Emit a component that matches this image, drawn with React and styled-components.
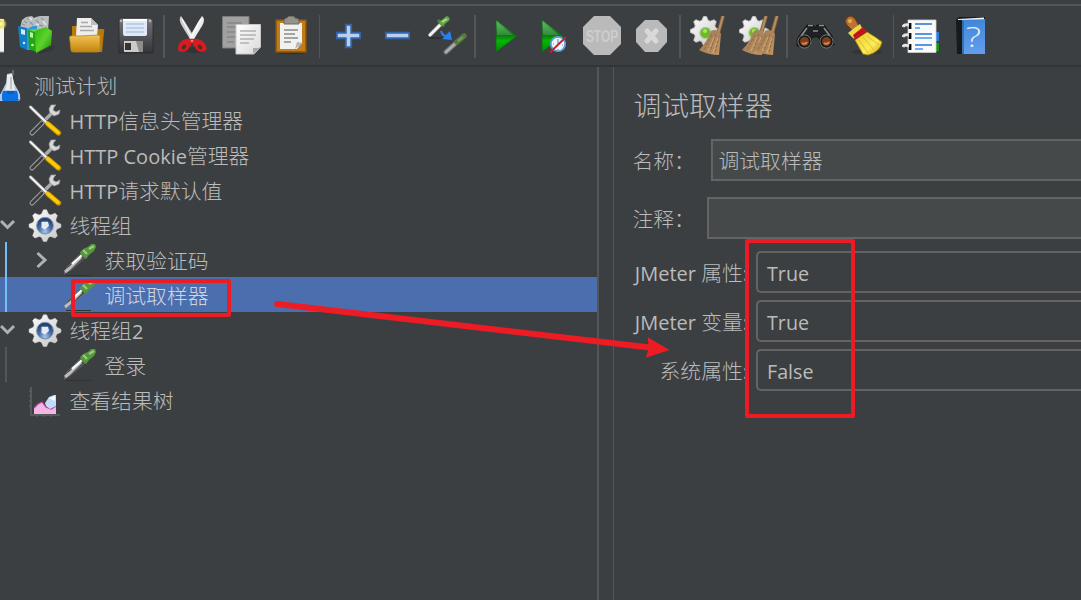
import React from "react";
import styled, { createGlobalStyle } from "styled-components";

const Global = createGlobalStyle`
  * { box-sizing: border-box; }
  body { margin: 0; overflow: hidden; background: #3c3f41; }
`;

const Window = styled.div`
  position: relative;
  display: flex;
  flex-direction: column;
  width: 1081px;
  height: 600px;
  padding-top: 4px;
  overflow: hidden;
  background: #3c3f41;
  color: #bbbbbb;
  font-family: "Open Sans", "Noto Sans CJK SC", sans-serif;
  font-size: 20.8px;
  font-weight: 300;
  line-height: 35px;
`;

const Toolbar = styled.div`
  display: flex;
  align-items: flex-start;
  height: 63px;
  padding-top: 9px;
  border-top: 2px solid #555555;
  border-bottom: 2px solid #323537;
`;

const Separator = styled.span`
  flex: none;
  width: ${(p) => p.$w || 2}px;
  height: 43px;
  margin-left: ${(p) => p.$gap}px;
  background: #555555;
`;

const ToolIcon = styled.svg`
  flex: none;
  display: block;
  height: 40px;
  margin-top: 1px;
  margin-left: ${(p) => p.$gap || 0}px;
`;

const Body = styled.div`
  display: flex;
  flex: 1;
  min-height: 0;
`;

const Tree = styled.div`
  flex: none;
  width: 597px;
`;

const Splitter = styled.div`
  flex: none;
  width: 17px;
  border-left: 2px solid #555555;
  border-right: 1px solid #555555;
`;

const TreeRow = styled.div`
  display: flex;
  align-items: center;
  height: 35px;
  padding-top: 4px;
  background: ${(p) => (p.$selected ? "#4b6eaf" : "transparent")};
  color: ${(p) => (p.$selected ? "#d0d5dc" : "#bbbbbb")};
  white-space: pre;
`;

const Gutter = styled.span`
  display: flex;
  align-items: center;
  flex: none;
  height: 35px;
  margin-top: -4px;
  width: ${(p) => p.$w}px;
`;

const Guide = styled.span`
  width: 2px;
  height: 35px;
  margin: 0 29px 0 5px;
  background: ${(p) => (p.$active ? "#73bef8" : "#555555")};
`;

const NodeIcon = styled.svg`
  flex: none;
  display: block;
  width: 36px;
  height: 35px;
  margin: -4px ${(p) => (p.$tight ? -2 : 6.5)}px 0 0;
`;

const Latin = styled.span`
  font-family: "Open Sans", sans-serif;
  font-weight: 400;
  font-size: ${(p) => p.$size || 20}px;
`;

const Panel = styled.div`
  flex: 1;
  padding: 19px 0 0 19.5px;
`;

const Title = styled.div`
  height: 40px;
  font-size: 27.8px;
  line-height: 39px;
`;

const Field = styled.div`
  display: flex;
  align-items: center;
  height: 42px;
  margin-top: ${(p) => p.$gap}px;
  white-space: pre;
`;

const FieldLabel = styled.span`
  flex: none;
  width: ${(p) => p.$w}px;
  padding-top: 2px;
  padding-right: ${(p) => (p.$align ? 3 : 0)}px;
  margin-left: ${(p) => (p.$align ? 0 : -1)}px;
  text-align: ${(p) => p.$align || "left"};
`;

const TextInput = styled.div`
  display: flex;
  align-items: center;
  flex: 1;
  height: 42px;
  padding: 2px 0 0 6px;
  background: #45494a;
  border: 2px solid #646464;
  border-right: 0;
`;

const Combo = styled.div`
  display: flex;
  align-items: center;
  flex: 1;
  height: 42px;
  margin-left: 5px;
  padding: 2px 0 0 9px;
  border: 2px solid #646464;
  border-right: 0;
  border-radius: 5px 0 0 5px;
`;

const Marker = styled.div`
  position: absolute;
  left: ${(p) => p.$x}px;
  top: ${(p) => p.$y}px;
  width: ${(p) => p.$w}px;
  height: ${(p) => p.$h}px;
  border: 4px solid #ed1c24;
  border-radius: 2px;
`;

const Arrow = styled.svg`
  position: absolute;
  left: 270px;
  top: 290px;
`;

const HiddenSvg = styled.svg`
  position: absolute;
`;

const Defs = () => (
  <HiddenSvg width="0" height="0">
    <defs>
      <linearGradient id="gold" x1="0" y1="0" x2="0" y2="1"><stop offset="0" stopColor="#efc35a" /><stop offset=".5" stopColor="#dba42f" /><stop offset="1" stopColor="#c08410" /></linearGradient>
      <linearGradient id="play" x1="0" y1="0" x2="0" y2="1"><stop offset="0" stopColor="#5fc067" /><stop offset=".45" stopColor="#16691a" /><stop offset=".65" stopColor="#00b900" /><stop offset="1" stopColor="#078508" /></linearGradient>
      <linearGradient id="disk" x1="0" y1="0" x2="0" y2="1"><stop offset="0" stopColor="#77777b" /><stop offset="1" stopColor="#343438" /></linearGradient>
      <linearGradient id="page" x1="0" y1="0" x2="1" y2="1"><stop offset="0" stopColor="#ffffff" /><stop offset="1" stopColor="#d9d9d9" /></linearGradient>
      <linearGradient id="straw" x1="0" y1="0" x2="1" y2="1"><stop offset="0" stopColor="#96775a" /><stop offset="1" stopColor="#c4945e" /></linearGradient>
      <linearGradient id="yellow" x1="0" y1="0" x2="1" y2="1"><stop offset="0" stopColor="#e5c928" /><stop offset=".6" stopColor="#ffec58" /><stop offset="1" stopColor="#c9a30f" /></linearGradient>
      <linearGradient id="blue" x1="0" y1="0" x2="0" y2="1"><stop offset="0" stopColor="#3f86d8" /><stop offset="1" stopColor="#659eef" /></linearGradient>
      <linearGradient id="binder" x1="0" y1="0" x2="1" y2="1"><stop offset="0" stopColor="#2fb412" /><stop offset=".5" stopColor="#5cd32c" /><stop offset="1" stopColor="#1c8b09" /></linearGradient>
      <radialGradient id="hub" cx=".5" cy=".85" r=".75"><stop offset="0" stopColor="#a5c8f1" /><stop offset=".5" stopColor="#496fa9" /><stop offset="1" stopColor="#233e70" /></radialGradient>
      <radialGradient id="glow"><stop offset="0" stopColor="#fffde0" /><stop offset=".5" stopColor="#ede05a" /><stop offset="1" stopColor="#ede05a" stopOpacity="0" /></radialGradient>
      <linearGradient id="silver" x1="0" y1="0" x2="1" y2="1"><stop offset="0" stopColor="#ffffff" /><stop offset="1" stopColor="#c4c4c4" /></linearGradient>
    </defs>
  </HiddenSvg>
);

const GEAR = Array.from({ length: 32 }, (_, i) => {
  const r = i % 4 < 2 ? 16 : 12.2;
  const a = ((i - 0.5) / 32) * Math.PI * 2;
  return `${(r * Math.cos(a)).toFixed(2)},${(r * Math.sin(a)).toFixed(2)}`;
}).join(" ");

const NewIcon = () => (
  <ToolIcon width="7" viewBox="0 0 7 40">
    <path d="M0 3H4V36H0Z" fill="#f5f5f2" /><path d="M0 36H4" stroke="#a4a4a4" />
    <circle cx="1" cy="8" r="6" fill="url(#glow)" />
  </ToolIcon>
);

const TemplatesIcon = () => (
  <ToolIcon $gap={11} width="38" viewBox="0 0 38 40">
    <path d="M22 36 37 29 34 35 20 38Z" fill="#2b2d2e" opacity=".5" />
    <path d="M2 12 4 4 8 1 14 0 16 2 18 1 22 0 31 0 30 16 5 16Z" fill="#b9bdbf" />
    <path d="M4 8 7 9M6 5 9 7M9 2 12 4M12 6 15 9M18 4 21 7M23 2 26 4M21 9 25 10" fill="none" stroke="#92979a" strokeWidth="1.3" />
    <path d="M11 2 14 4M18 8 21 9M25 5 28 9" stroke="#e1e4e5" strokeWidth="1.6" />
    <path d="M0 10 9 12V34L2 31Z" fill="#147dc5" /><path d="M9 13 15 10H19V34H9Z" fill="#2a9ce2" />
    <path d="M3 13 7 14V19L3 18Z" fill="#c9eaff" /><circle cx="6" cy="27" r="1.2" fill="#d4efff" />
    <path d="M10 14 17 15 18 36 11 33Z" fill="#22a70e" /><path d="M10 14 28 12 30 13 17 16Z" fill="#67d83e" /><path d="M17 15 28 11 34 15 33 29 18 37Z" fill="url(#binder)" />
    <path d="M12 16 15 17V22L12 21Z" fill="#b9f5a2" /><circle cx="14.5" cy="29" r="1.3" fill="#c7f9b6" />
  </ToolIcon>
);

const OpenIcon = () => (
  <ToolIcon $gap={13} width="37" viewBox="0 0 37 40">
    <path d="M3 18V10H12L14 13H34Q36 13 35 16L33 36H3Z" fill="#b87a0b" />
    <path d="M8 2 22 2 29 9 28 20H7Z" fill="#eeeeee" /><path d="M22 2V9H29Z" fill="#bebebe" />
    <path d="M12 6.5H19M11 10.5H23M11 14.5H25" stroke="#a8a8a8" strokeWidth="1.5" />
    <path d="M.5 21Q1 19 10 20L29 19Q32 19 31 22L31 34Q31 36 28 36H5Q2 36 2 34Z" fill="url(#gold)" stroke="#bd861a" strokeWidth=".8" />
  </ToolIcon>
);

const SaveIcon = () => (
  <ToolIcon $gap={12} width="36" viewBox="0 0 36 40">
    <path d="M1 3 3 2H32L35 4V37H1Z" fill="url(#disk)" stroke="#2a2a2c" strokeWidth=".8" />
    <path d="M5 3H29V19Q28 20 27 20H7Q5 20 5 18Z" fill="#dfe9f7" /><path d="M5 3H29V5H5Z" fill="#fff" />
    <path d="M8 8H26M8 12H26M8 16H26" stroke="#9ab6d8" />
    <path d="M6 25H25V36H6Z" fill="#cccbc9" /><path d="M7 27H13V34H7Z" fill="#333435" />
    <path d="M18 25H25V36H21Z" fill="#8e8d8c" /><circle cx="3" cy="5" r="1.2" fill="#b9b9b9" /><circle cx="32" cy="5" r="1.2" fill="#b9b9b9" />
  </ToolIcon>
);

const CutIcon = () => (
  <ToolIcon $gap={12} width="32" viewBox="0 0 32 40">
    <ellipse cx="17" cy="34" rx="11" ry="3" fill="#292b2c" opacity=".6" />
    <path d="M4 0Q1 3 5 10L13 23 18 22 8 6Z" fill="#d1d1d1" /><path d="M25 0Q29 3 25 10L17 23 12 22 21 6Z" fill="#ededed" />
    <path d="M5 3 15 22M24 3 14 22" stroke="#fff" strokeWidth="1.1" />
    <path d="M14 23Q6 22 2 28Q-1 36 5 36Q12 36 15 26Q19 36 25 36Q32 35 28 28Q24 22 15 23Z" fill="#d91a1f" />
    <ellipse cx="7" cy="31" rx="2.7" ry="1.8" fill="#4d2d2e" transform="rotate(-48 7 31)" /><ellipse cx="23" cy="31" rx="2.7" ry="1.8" fill="#4d2d2e" transform="rotate(48 23 31)" />
    <circle cx="15" cy="25" r="1.3" fill="#ff7474" />
  </ToolIcon>
);

const CopyIcon = () => (
  <ToolIcon $gap={13} width="40" viewBox="0 0 40 40">
    <path d="M.5 .5H27V32H.5Z" fill="#a0a1a0" stroke="#7b7b7a" />
    <path d="M5 7H20M5 11H20M5 16H14M5 21H14M5 26H12" stroke="#858685" strokeWidth="1.3" />
    <path d="M14 8.5H38.5V31L32 38H14Z" fill="url(#page)" stroke="#c8c8c8" /><path d="M31 38V32H38Z" fill="#a9a9a9" />
    <path d="M18 15H34M18 19H34M18 23H32M18 27H27" stroke="#b1b1b1" strokeWidth="1.5" />
  </ToolIcon>
);

const PasteIcon = () => (
  <ToolIcon $gap={13} width="33" viewBox="0 0 33 40">
    <ellipse cx="16" cy="37" rx="13" ry="1.5" fill="#303233" />
    <path d="M1 4H31V36H1Z" fill="#c17c1b" stroke="#87540c" strokeWidth="1.5" />
    <path d="M5 7H27V27L22 33H5Z" fill="#f1f1f0" /><path d="M20 33 22 26 28 27Z" fill="#b6b6b4" />
    <path d="M9 14H23M9 18H20M9 22H23M9 26H16" stroke="#8a8a88" strokeWidth="1.4" />
    <path d="M9 8V4Q10 2 12 2Q13 0 16 0Q20 0 20 2Q24 2 24 5V8Z" fill="#939388" stroke="#6a6a62" />
  </ToolIcon>
);

const PlusIcon = () => (
  <ToolIcon $gap={16} width="25" viewBox="0 0 25 40">
    <path d="M9.8 8.8H15.2V16.8H24.2V22.2H15.2V31.2H9.8V22.2H.8V16.8H9.8Z" fill="#b8d0ed" stroke="#3264aa" strokeWidth="1.9" />
  </ToolIcon>
);

const MinusIcon = () => (
  <ToolIcon $gap={24} width="25" viewBox="0 0 25 40">
    <path d="M.8 16.8H24.2V22.2H.8Z" fill="#b8d0ed" stroke="#3264aa" strokeWidth="1.9" />
  </ToolIcon>
);

const ToggleIcon = () => (
  <ToolIcon $gap={18} width="39" viewBox="0 0 39 40">
    <path d="M1 22H17" stroke="#252728" strokeWidth="1.2" />
    <path d="M2 19 13 8" stroke="#777" strokeWidth="4.5" /><path d="M1 20 13 8" stroke="#f5f5f5" strokeWidth="3" />
    <path d="M11 5 15 9" stroke="#4b8134" strokeWidth="3.5" strokeLinecap="round" /><path d="M14 7 19 3" stroke="#65a745" strokeWidth="5" strokeLinecap="round" /><path d="M14 6 19 3" stroke="#b3df94" strokeWidth="1.5" />
    <path d="M13 15Q15 21 20 20" fill="none" stroke="#2c7ded" strokeWidth="2.2" /><path d="M22 15 24 24 14 23Z" fill="#2581f5" />
    <g opacity=".85">
      <path d="M18 36 29 26" stroke="#7f817e" strokeWidth="5" strokeLinecap="round" /><path d="M18 36 29 26" stroke="#c0c1be" strokeWidth="2.6" strokeLinecap="round" />
      <path d="M29 26 36 20" stroke="#5b833f" strokeWidth="5.5" strokeLinecap="round" /><path d="M30 25 35 21" stroke="#86ad6e" strokeWidth="2" />
    </g>
  </ToolIcon>
);

const PlayIcon = () => (
  <ToolIcon $gap={19} width="24" viewBox="0 0 24 40"><path d="M1 4 22 20 1 36Z" fill="url(#play)" stroke="#17631a" strokeWidth=".8" /><path d="M2 19 18 19 2 7Z" fill="#63c16b" opacity=".4" /></ToolIcon>
);

const PlayNoPauseIcon = () => (
  <ToolIcon $gap={22} width="26" viewBox="0 0 26 40">
    <path d="M1 4 22 20 1 36Z" fill="url(#play)" stroke="#17631a" strokeWidth=".8" /><path d="M2 19 18 19 2 7Z" fill="#63c16b" opacity=".4" />
    <circle cx="17" cy="28" r="7.2" fill="#eef5fc" stroke="#5d9bd8" strokeWidth="1.8" />
    <path d="M17 23V28M12 28H13M21 29H22M17 33V34" fill="none" stroke="#7591b0" strokeWidth="1.2" /><path d="M9 36.5 25 21" stroke="#d31d25" strokeWidth="1.9" />
  </ToolIcon>
);

const StopIcon = () => (
  <ToolIcon $gap={16} width="38" viewBox="0 0 38 40">
    <path d="M11 0H27L38 11V28L27 39H11L0 28V11Z" fill="#bababa" />
    <g transform="translate(19 26) scale(.7 1)">
      <text x="0" y="0" textAnchor="middle" fontFamily="Liberation Sans" fontWeight="700" fontSize="17" fill="#cdcdcd">STOP</text>
    </g>
  </ToolIcon>
);

const ShutdownIcon = () => (
  <ToolIcon $gap={15} width="31" viewBox="0 0 31 40">
    <path d="M9 4H22L31 13V26L22 36H9L0 26V13Z" fill="#bababa" /><path d="M11 15 20 25M20 15 11 25" stroke="#d9d9d9" strokeWidth="5" strokeLinecap="round" />
  </ToolIcon>
);

const Brush = ({ x }) => (
  <g transform={`translate(${x} 0)`}>
    <path d="M33 0 28 18" stroke="#785b3b" strokeWidth="4" /><path d="M33 0 28 18" stroke="#b58e64" strokeWidth="2.2" />
    <path d="M21 15Q27 12 31 18L29 39Q18 39 9 34Q17 26 21 15Z" fill="url(#straw)" />
    <path d="M22 19 14 34M26 18 20 36M29 20 25 37" stroke="#886847" strokeWidth=".9" strokeDasharray="3 1.5" /><path d="M24 21 18 35M28 21 23 37" stroke="#dcb07a" strokeWidth=".8" strokeDasharray="5 1" />
  </g>
);

const ClearIcon = ({ all }) => (
  <ToolIcon $gap={all ? 8 : 9} width={all ? 43 : 39} viewBox={all ? "-2 0 43 40" : "0 0 39 40"}>
    <polygon points={GEAR} transform="translate(15 15) scale(.91)" fill="url(#silver)" stroke="#c6c6c6" />
    <circle cx="15.5" cy="17" r="5.6" fill="#6cba25" stroke="#b0c99b" strokeWidth="1.3" /><circle cx="15" cy="15" r="2" fill="#a8e861" />
    {all && <Brush x={-6} />}<Brush x={all ? 5 : 0} />
  </ToolIcon>
);

const FindIcon = () => (
  <ToolIcon $gap={8} width="39" viewBox="0 0 39 40">
    <path d="M11 9H17L19 12 21 9H28L36 20 38 29H24L23 21H16L14 30H1V24L3 20Z" fill="#1f2021" stroke="#151617" />
    <path d="M12 9.5H17M23 9.5H28M5 20 11 12M34 20 28 12M17 15H22" stroke="#8a8d8e" strokeWidth="1.7" />
    <circle cx="8.5" cy="25.5" r="6.6" fill="#161718" stroke="#77797a" /><circle cx="30.5" cy="25.5" r="6.6" fill="#161718" stroke="#77797a" />
    <circle cx="8.5" cy="25.5" r="4.5" fill="#7e3e18" /><circle cx="30.5" cy="25.5" r="4.5" fill="#7e3e18" /><path d="M6 27Q9 29 11 26M28 27Q31 29 33 26" stroke="#d98b50" strokeWidth="2" fill="none" />
  </ToolIcon>
);

const BroomIcon = () => (
  <ToolIcon $gap={10} width="38" viewBox="0 0 38 40">
    <ellipse cx="22" cy="36" rx="15" ry="2.5" fill="#2b2d2e" opacity=".6" />
    <path d="M2 2Q6-2 10 3L15 12 8 15 2 9Q-1 5 2 2Z" fill="#bd752d" stroke="#754117" /><circle cx="5" cy="5" r="2" fill="#e7a961" />
    <path d="M3 17Q9 12 15 8L18 14 9 23Z" fill="#edda49" /><path d="M8 19 18 11 22 16 10 24Z" fill="#d3121d" />
    <path d="M10 24 22 16Q29 20 37 26Q35 36 23 39L18 38Q14 31 10 24Z" fill="url(#yellow)" stroke="#ad8c0c" strokeWidth=".8" />
    <path d="M14 24 23 37M18 21 29 34M22 20 34 29" stroke="#d3b62e" strokeWidth=".8" /><path d="M9 20 19 14M10 23 21 16" stroke="#82111a" strokeWidth=".7" />
  </ToolIcon>
);

const FunctionIcon = () => (
  <ToolIcon $gap={8} width="38" viewBox="0 0 38 40">
    <path d="M33 16H37V25H33Z" fill="#257ede" /><path d="M33 27H37V35H33Z" fill="#139511" />
    <path d="M6 4H34V36.5H6Z" fill="#fafafa" stroke="#d1d1d1" strokeWidth=".8" />
    <path d="M8 7V13M8 17V23M8 28V34" stroke="#08090a" strokeWidth="2.8" />
    <path d="M1 11Q2 8 7 9M1 21Q2 18 7 19M1 31Q2 28 7 30" fill="none" stroke="#e4e4e4" strokeWidth="3" />
    <path d="M13 8H30M13 18H30M13 29H30" stroke="#2374d7" strokeWidth="1.6" /><path d="M13 12H18M13 22H30M13 33H21" stroke="#4297ff" strokeWidth="1.7" />
  </ToolIcon>
);

const HelpIcon = () => (
  <ToolIcon $gap={16} width="30" viewBox="0 0 30 40">
    <path d="M0 4 3 1H29V38H1Z" fill="#17191b" /><path d="M6 3H29V38H6Z" fill="url(#blue)" /><path d="M2 3 28 1.5V3.2L2 4Z" fill="#f2f3f3" />
    <path d="M6 5H8V38H6Z" fill="#295f9c" opacity=".7" />
    <g transform="translate(17.5 31) scale(1.35 1)">
      <text x="0" y="0" textAnchor="middle" fontFamily="Open Sans" fontSize="27" fontWeight="300" fill="#e4eefe">?</text>
    </g>
  </ToolIcon>
);

const Wrench = () => (
  <NodeIcon viewBox="27 102 36 35">
    <path d="M32 133 43 122" stroke="#9b9b9b" strokeWidth="5" strokeLinecap="round" /><path d="M32 133 42 123" stroke="#3a3c3d" strokeWidth="2.8" strokeLinecap="round" strokeDasharray="4 1" />
    <path d="M44 121 53 112" stroke="#aaaaaa" strokeWidth="3.6" /><path d="M56 105 51 105 49 109 50 113 54 116 59 114 60 110 56 112 53 110 54 107Z" fill="#d9d9d9" stroke="#999" strokeWidth=".8" />
    <path d="M30.5 107 47 123" stroke="#808080" strokeWidth="3.5" strokeLinecap="round" /><path d="M30.5 107 47 123" stroke="#f4f4f4" strokeWidth="2" strokeLinecap="round" />
    <path d="M48 124 58.5 133" stroke="#c49700" strokeWidth="5.2" strokeLinecap="round" /><path d="M47.5 123.5 58 132.5" stroke="#ffca0b" strokeWidth="3.4" strokeLinecap="round" />
  </NodeIcon>
);

const Gear = () => (
  <NodeIcon viewBox="-18 -18.7 36 35">
    <polygon points={GEAR} fill="url(#silver)" stroke="#d8d8d8" strokeWidth=".5" /><circle r="8.4" fill="url(#hub)" stroke="#8394ad" />
    <path d="M-3.5-4H3L4 0 0 4-3.5 2Z" fill="#e6ebf1" />
  </NodeIcon>
);

const Pipette = () => (
  <NodeIcon viewBox="62 242 36 35">
    <path d="M66 275.5H91" stroke="#303234" strokeWidth="1" />
    <path d="M64 274 67 267 80 254 85 258 71 270Z" fill="#4a4b4c" stroke="#777" strokeWidth=".6" />
    <path d="M65 272 70 268 81 257" fill="none" stroke="#bdbdbd" strokeWidth="3" /><path d="M72 264 82 255" stroke="#fff" strokeWidth="2.2" />
    <path d="M80 252 85 248 88 247 91 244 95 244 96 247 94 251 89 255 86 259 81 255Z" fill="#56963f" /><path d="M83 250 87 254M89 249 94 246" stroke="#9dcc7e" strokeWidth="2.2" />
  </NodeIcon>
);

const Flask = () => (
  <NodeIcon $tight viewBox="0 67 36 35">
    <path d="M7 74 12 73 14 83 19 92Q22 101 18 101H1Q-3 101 0 95L6 83Z" fill="#b3c7de" />
    <path d="M7 75 12 74 14 84 15 90H5L7 83Z" fill="#ededed" /><path d="M11 77V89" stroke="#b5b5b5" strokeWidth="1.5" />
    <path d="M3 91H17L19 99Q19 101 17 101H3L1 98Z" fill="#0b70e2" /><path d="M7 91H14V94H7Z" fill="#0a5fb8" /><path d="M1 94V99M19 94V99" stroke="#a8c9f0" strokeWidth="2" />
    <path d="M13 70V75" stroke="#8d8f90" />
  </NodeIcon>
);

const ResultIcon = () => (
  <NodeIcon viewBox="27 382 36 35">
    <path d="M31 387V415H60" fill="none" stroke="#606263" strokeWidth="1.5" /><path d="M29 391H31M29 396H31M29 401H31M29 406H31M37 415V417M44 415V417M51 415V417" stroke="#606263" />
    <path d="M34 408 38 404 42 402 46 407 51 409 56 406V414H34Z" fill="#f5b5e6" /><path d="M34 408 38 404 42 402 46 407 51 409 56 406" fill="none" stroke="#be3e98" strokeWidth="1.2" />
    <path d="M45 403 49 397 54 395H56V406L50 409 46 406Z" fill="#c3dcfa" /><path d="M49 398 55 396V401Z" fill="#f6faff" />
  </NodeIcon>
);

const Down = () => <svg width="16" height="35" viewBox="0 0 16 35"><path d="M1 14 7.5 20.5 14 14" fill="none" stroke="#afb1b3" strokeWidth="3" /></svg>;
const Right = () => <svg width="26" height="35" viewBox="0 0 26 35"><path d="M1.5 11 9 18 1.5 25" fill="none" stroke="#afb1b3" strokeWidth="3" /></svg>;

export default function App() {
  return (
    <Window>
      <Global />
      <Defs />
      <Toolbar>
        <NewIcon /><TemplatesIcon /><OpenIcon /><SaveIcon />
        <Separator $gap={9} />
        <CutIcon /><CopyIcon /><PasteIcon />
        <Separator $gap={11} $w={1} />
        <PlusIcon /><MinusIcon /><ToggleIcon />
        <Separator $gap={7} />
        <PlayIcon /><PlayNoPauseIcon /><StopIcon /><ShutdownIcon />
        <Separator $gap={12} />
        <ClearIcon /><ClearIcon all />
        <Separator $gap={6} />
        <FindIcon /><BroomIcon />
        <Separator $gap={10} $w={1} />
        <FunctionIcon /><HelpIcon />
      </Toolbar>
      <Body>
        <Tree>
          <TreeRow><Flask />测试计划</TreeRow>
          <TreeRow><Gutter $w={27} /><Wrench /><Latin>HTTP</Latin>信息头管理器</TreeRow>
          <TreeRow><Gutter $w={27} /><Wrench /><Latin>HTTP Cookie</Latin>管理器</TreeRow>
          <TreeRow><Gutter $w={27} /><Wrench /><Latin>HTTP</Latin>请求默认值</TreeRow>
          <TreeRow><Gutter $w={27}><Down /></Gutter><Gear />线程组</TreeRow>
          <TreeRow><Gutter $w={62}><Guide $active /><Right /></Gutter><Pipette />获取验证码</TreeRow>
          <TreeRow $selected><Gutter $w={62}><Guide $active /></Gutter><Pipette />调试取样器</TreeRow>
          <TreeRow><Gutter $w={27}><Down /></Gutter><Gear />线程组<Latin>2</Latin></TreeRow>
          <TreeRow><Gutter $w={62}><Guide /></Gutter><Pipette />登录</TreeRow>
          <TreeRow><Gutter $w={27} /><ResultIcon />查看结果树</TreeRow>
        </Tree>
        <Splitter />
        <Panel>
          <Title>调试取样器</Title>
          <Field $gap={13}><FieldLabel $w={78}>名称：</FieldLabel><TextInput>调试取样器</TextInput></Field>
          <Field $gap={16}><FieldLabel $w={74.5}>注释：</FieldLabel><TextInput /></Field>
          <Field $gap={12}><FieldLabel $w={117.5} $align="right"><Latin>JMeter </Latin>属性<Latin>:</Latin></FieldLabel><Combo><Latin $size={19.7}>True</Latin></Combo></Field>
          <Field $gap={7}><FieldLabel $w={117.5} $align="right"><Latin>JMeter </Latin>变量<Latin>:</Latin></FieldLabel><Combo><Latin $size={19.7}>True</Latin></Combo></Field>
          <Field $gap={7}><FieldLabel $w={117.5} $align="right">系统属性<Latin>:</Latin></FieldLabel><Combo><Latin $size={19.7}>False</Latin></Combo></Field>
        </Panel>
      </Body>
      <Marker $x={71} $y={279} $w={160} $h={38} />
      <Marker $x={745} $y={239} $w={110} $h={179} />
      <Arrow width="402" height="72" viewBox="270 290 402 72">
        <path d="M277 304 650 347.6" stroke="#ed1c24" strokeWidth="6" strokeLinecap="round" />
        <path d="M647.7 337.3 669.5 350 645.7 357.8 649 348Z" fill="#ed1c24" />
      </Arrow>
    </Window>
  );
}
